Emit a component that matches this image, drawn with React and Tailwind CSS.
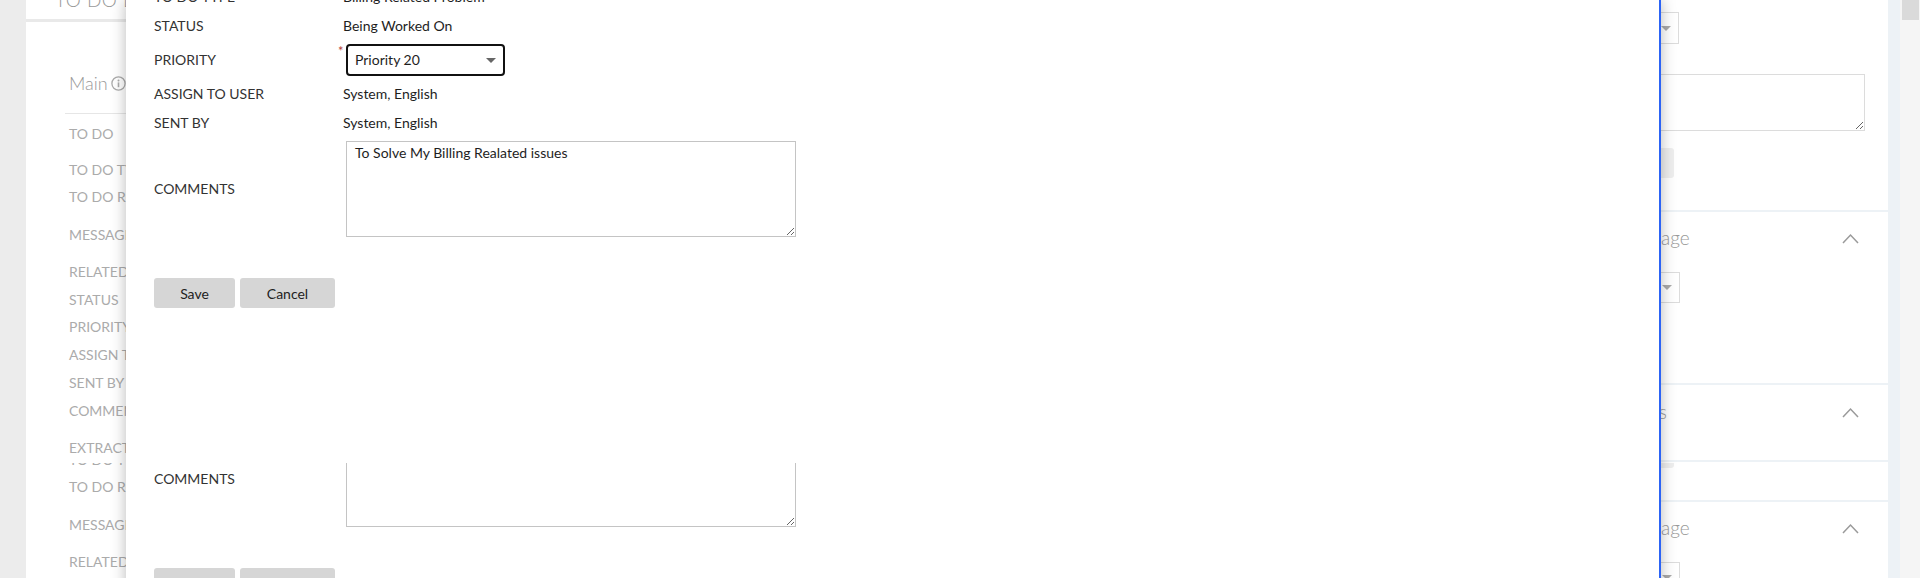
import React from "react";

const pageLabels = [
  ["TO DO", "mt-[10px]"],
  ["TO DO TYPE", "mt-[16px]"],
  ["TO DO ROLE", "mt-[7px]"],
  ["MESSAGE", "mt-[18px]"],
  ["RELATED OBJECT", "mt-[17px]"],
  ["STATUS", "mt-[8px]"],
  ["PRIORITY", "mt-[7px]"],
  ["ASSIGN TO USER", "mt-[8px]"],
  ["SENT BY", "mt-[8px]"],
  ["COMMENTS", "mt-[8px]"],
  ["EXTRACT", "mt-[17px]"],
  ["TO DO TYPE", "mt-[8px]"],
];

function InfoIcon() {
  return (
    <svg width="15" height="15" viewBox="0 0 15 15" className="shrink-0">
      <circle cx="7.5" cy="7.5" r="6.6" fill="none" stroke="#ababab" strokeWidth="1.3" />
      <circle cx="7.5" cy="4.4" r="1" fill="#ababab" />
      <line x1="7.5" y1="6.4" x2="7.5" y2="11.2" stroke="#ababab" strokeWidth="1.6" />
    </svg>
  );
}

function Chevron() {
  return (
    <svg width="17" height="11" viewBox="0 0 17 11" className="shrink-0">
      <polyline points="1,10 8.5,2 16,10" fill="none" stroke="#9a9a9a" strokeWidth="1.5" />
    </svg>
  );
}

function Caret({ color }) {
  return (
    <div
      className={
        "w-0 h-0 border-l-[5px] border-r-[5px] border-t-[5px] border-l-transparent border-r-transparent " +
        color
      }
    />
  );
}

function Row({ label, h, children }) {
  return (
    <div className={"flex items-center " + h}>
      <div className="w-[189px] shrink-0 text-[14px] leading-[20px] text-[#333]">{label}</div>
      <div className="flex-1 flex items-center text-[14px] leading-[20px] text-[#1e1e1e]">{children}</div>
    </div>
  );
}

function Modal() {
  return (
    <div className="absolute left-[126px] top-0 h-[578px] w-[1535px] bg-white border-r-2 border-[#2c64f5] shadow-[0_0_14px_rgba(0,0,0,0.28)]">
      <div className="-mt-[17px] pl-[28px] flex flex-col">
        <Row label="TO DO TYPE" h="h-[28px]">Billing Related Problem</Row>
        <Row label="STATUS" h="h-[29px]">Being Worked On</Row>
        <Row label="PRIORITY" h="h-[40px]">
          <div className="relative ml-[3px] w-[159px] h-[32px] border-2 border-[#111] rounded-[4px] flex items-center pl-[7px]">
            <span className="absolute left-[-10px] top-[-1px] text-[13px] leading-[12px] text-[#b5443a]">*</span>
            <span>Priority 20</span>
            <div className="absolute right-[7px] top-[12px]">
              <Caret color="border-t-[#666]" />
            </div>
          </div>
        </Row>
        <Row label="ASSIGN TO USER" h="h-[28px]">System, English</Row>
        <Row label="SENT BY" h="h-[29px]">System, English</Row>
        <Row label="COMMENTS" h="h-[104px]">
          <textarea
            readOnly
            defaultValue="To Solve My Billing Realated issues"
            className="ml-[3px] w-[450px] h-[96px] border border-[#c4c4c4] px-[8px] pt-[1px] text-[14px] leading-[20px] text-[#1e1e1e] outline-none font-[Lato,sans-serif]"
          />
        </Row>
        <div className="mt-[37px] flex gap-[5px]">
          <button className="w-[81px] h-[30px] bg-[#d6d6d6] rounded-[3px] text-[14px] text-[#222]">Save</button>
          <button className="w-[95px] h-[30px] bg-[#d6d6d6] rounded-[3px] text-[14px] text-[#222]">Cancel</button>
        </div>
      </div>
    </div>
  );
}

function Screen() {
  return (
    <div className="relative h-[578px] w-[1920px] flex bg-[#ececec] font-[Lato,sans-serif]">
      <div className="w-[26px] shrink-0 bg-[#ececec]" />
      <div className="flex-1 flex min-w-0 bg-white">
        {/* left page column */}
        <div className="flex-1 flex flex-col min-w-0">
          <div className="h-[19px] pl-[29px]">
            <div className="-mt-[11px] text-[19px] leading-[22px] tracking-[0.5px] text-[#9a9a9a] font-light">TO DO ENTRY</div>
          </div>
          <div className="h-[3px] bg-[#e9e9e9]" />
          <div className="pl-[39px]">
            <div className="pl-[4px] mt-[49px] flex items-center gap-[3px] text-[18px] leading-[24px] text-[#999] font-light">
              <span>Main</span>
              <InfoIcon />
            </div>
            <div className="mt-[18px] h-px bg-[#e6e6e6]" />
            <div className="pl-[4px] flex flex-col text-[14px] leading-[20px] text-[#ababab]">
              {pageLabels.map(([t, mt], i) => (
                <div key={i} className={mt}>{t}</div>
              ))}
            </div>
          </div>
        </div>
        {/* right page column */}
        <div className="w-[290px] shrink-0 flex flex-col gap-[2px] bg-[#edf2f6]">
          <div className="h-[210px] bg-white pl-[20px] pr-[23px] flex flex-col">
            <div className="mt-[12px] h-[32px] w-[61px] border border-[#dcdcdc] flex items-center justify-end pr-[7px]">
              <Caret color="border-t-[#aaa]" />
            </div>
            <textarea readOnly className="mt-[30px] h-[57px] w-full border border-[#dcdcdc] outline-none" />
            <div className="mt-[17px] h-[30px] w-[56px] bg-[#efefef] rounded-[3px]" />
          </div>
          <div className="h-[171px] bg-white pl-[20px] pr-[29px] flex flex-col">
            <div className="mt-[13px] flex items-center justify-between">
              <span className="text-[19px] leading-[26px] text-[#999] font-light">Message</span>
              <Chevron />
            </div>
            <div className="mt-[21px] h-[31px] w-[62px] border border-[#dcdcdc] flex items-center justify-end pr-[7px]">
              <Caret color="border-t-[#aaa]" />
            </div>
          </div>
          <div className="h-[75px] bg-white pl-[20px] pr-[29px] flex flex-col">
            <div className="mt-[14px] flex items-center justify-between">
              <span className="text-[19px] leading-[26px] text-[#999] font-light">Notes</span>
              <Chevron />
            </div>
          </div>
          <div className="flex-1 bg-white" />
        </div>
        <div className="w-[12px] shrink-0 bg-[#edf2f6]" />
      </div>
      <div className="w-[20px] shrink-0 bg-[#f5f5f5] pl-[2px]">
        <div className="w-[17px] h-[20px] bg-[#dadada]" />
      </div>
      <Modal />
    </div>
  );
}

export default function App() {
  return (
    <div className="w-[1920px] h-[578px] overflow-hidden bg-white">
      <div className="h-[463px] overflow-hidden">
        <Screen />
      </div>
      <div className="h-[115px] overflow-hidden">
        <div className="-mt-[173px]">
          <Screen />
        </div>
      </div>
    </div>
  );
}
